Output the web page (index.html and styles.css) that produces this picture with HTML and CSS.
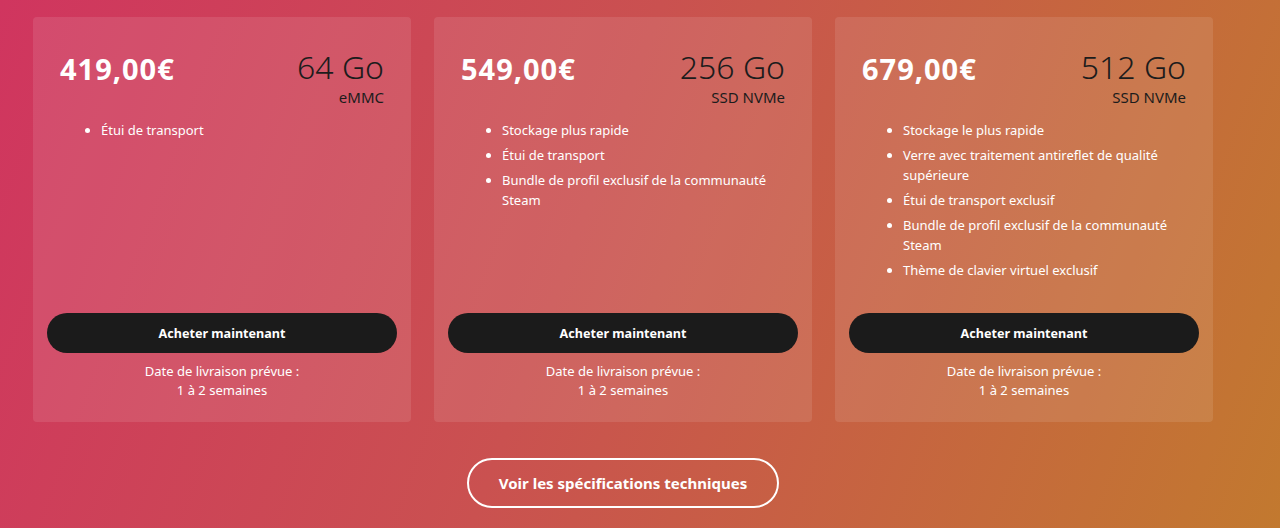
FILE: index.html
```html
<!DOCTYPE html>
<html>
<head>
  <title>Steam Deck - Précommande</title>
  <meta charset="UTF-8" />
  <meta name="viewport" content="width=device-width, initial-scale=1.0">
  <link rel="stylesheet" href="styles.css">
</head>
<body>
  <div class="page">
    <div class="cards">
      <div class="card">
        <div class="card-head">
          <div class="price">419,00€</div>
          <div class="storage">
            <div class="size">64 Go</div>
            <div class="kind">eMMC</div>
          </div>
        </div>
        <ul class="features">
          <li>Étui de transport</li>
        </ul>
        <button class="buy">Acheter maintenant</button>
        <p class="delivery">Date de livraison prévue :<br>1 à 2 semaines</p>
      </div>

      <div class="card">
        <div class="card-head">
          <div class="price">549,00€</div>
          <div class="storage">
            <div class="size">256 Go</div>
            <div class="kind">SSD NVMe</div>
          </div>
        </div>
        <ul class="features">
          <li>Stockage plus rapide</li>
          <li>Étui de transport</li>
          <li>Bundle de profil exclusif de la communauté Steam</li>
        </ul>
        <button class="buy">Acheter maintenant</button>
        <p class="delivery">Date de livraison prévue :<br>1 à 2 semaines</p>
      </div>

      <div class="card">
        <div class="card-head">
          <div class="price">679,00€</div>
          <div class="storage">
            <div class="size">512 Go</div>
            <div class="kind">SSD NVMe</div>
          </div>
        </div>
        <ul class="features">
          <li>Stockage le plus rapide</li>
          <li>Verre avec traitement antireflet de qualité supérieure</li>
          <li>Étui de transport exclusif</li>
          <li>Bundle de profil exclusif de la communauté Steam</li>
          <li>Thème de clavier virtuel exclusif</li>
        </ul>
        <button class="buy">Acheter maintenant</button>
        <p class="delivery">Date de livraison prévue :<br>1 à 2 semaines</p>
      </div>
    </div>

    <div class="more">
      <button class="specs">Voir les spécifications techniques</button>
    </div>
  </div>
</body>
</html>
```

FILE: styles.css
```css
html, body {
  margin: 0;
  height: 100%;
}
body {
  font-family: "Noto Sans", "Open Sans", sans-serif;
  color: #fff;
  background: linear-gradient(110deg, #d0355f 0%, #ca5150 45%, #c2792f 100%);
  overflow: hidden;
}
.page {
  padding: 17px 67px 0 33px;
}
.cards {
  display: grid;
  grid-template-columns: repeat(3, 378px);
  gap: 23px;
}
.card {
  background: rgba(255, 255, 255, 0.1);
  border-radius: 4px;
  height: 405px;
  box-sizing: border-box;
  padding: 14px 14px 0 14px;
  display: flex;
  flex-direction: column;
}
.card-head {
  display: flex;
  justify-content: space-between;
  align-items: flex-start;
  padding: 18px 13px 0 13px;
}
.price {
  font-size: 29px;
  font-weight: 700;
  letter-spacing: 1px;
  line-height: 40px;
}
.storage {
  text-align: right;
  color: #1c1c1c;
}
.size {
  font-size: 32px;
  font-weight: 300;
  line-height: 36px;
}
.kind {
  font-size: 15px;
  line-height: 18px;
  margin-top: 3px;
}
.features {
  flex: 1;
  margin: 14px 0 0 0;
  padding: 0 24px 0 54px;
  font-size: 13px;
  line-height: 20px;
}
.features li {
  margin-bottom: 5px;
}
.buy {
  height: 40px;
  border: none;
  border-radius: 20px;
  background: #1b1b1b;
  color: #fff;
  font-family: inherit;
  font-size: 12.6px;
  font-weight: 700;
}
.delivery {
  margin: 9px 0 22px 0;
  text-align: center;
  font-size: 13px;
  line-height: 19px;
}
.more {
  display: flex;
  justify-content: center;
  width: 1180px;
  padding-top: 36px;
}
.specs {
  width: 312px;
  height: 50px;
  border: 2px solid #fff;
  border-radius: 25px;
  background: transparent;
  color: #fff;
  font-family: inherit;
  font-size: 15px;
  font-weight: 700;
}
```
